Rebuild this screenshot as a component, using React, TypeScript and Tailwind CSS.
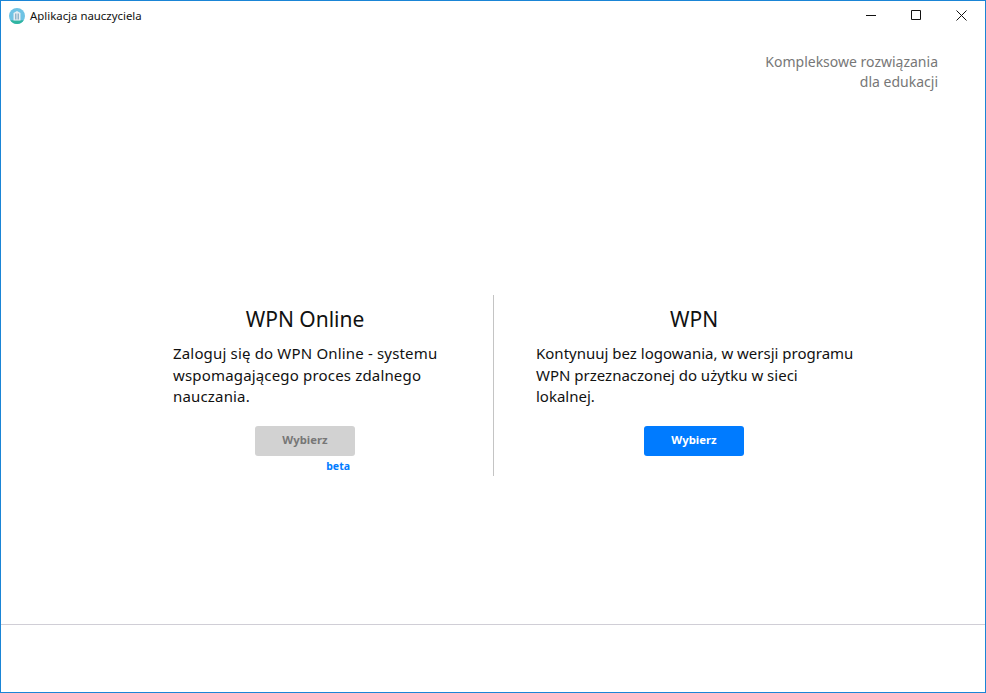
import React from "react";

const font = { fontFamily: '"Noto Sans", "Open Sans", sans-serif' };

function AppIcon() {
  return (
    <svg width="16" height="16" viewBox="0 0 16 16" className="shrink-0">
      <circle cx="8" cy="8" r="8" fill="#6fc3e4" />
      <path d="M1.2 12.2h13.6a8 8 0 0 1-13.6 0z" fill="#2fb5a0" />
      <path d="M4.5 12.5V5L8 3l3.5 2v7.5z" fill="#e6eef3" />
      <rect x="6.2" y="5.5" width="1.2" height="6" fill="#7da6bf" />
      <rect x="8.6" y="5.5" width="1.2" height="6" fill="#7da6bf" />
    </svg>
  );
}

function Choice({ title, text, disabled, beta, w, col }: { title: string; text: string[]; disabled?: boolean; beta?: boolean; w: string; col: string }) {
  return (
    <div className={`flex flex-col items-center ${col}`}>
      <h2 className="mt-[8px] text-[21px] leading-[33px] text-[#111]">{title}</h2>
      <div className={`mt-[7px] text-[15px] leading-[21.5px] text-[#111] ${w}`}>
        {text.map((t) => (
          <div key={t} className="whitespace-nowrap">{t}</div>
        ))}
      </div>
      <button
        className={`mt-[18px] h-[30px] w-[100px] rounded-[3px] text-[11.3px] font-bold ${disabled ? "bg-[#d2d2d2] text-[#777]" : "bg-[#007bff] text-white"}`}
      >
        Wybierz
      </button>
      {beta && <div className="mt-[2px] w-[100px] pr-[5px] text-right text-[10.5px] font-bold leading-[17px] text-[#007bff]">beta</div>}
    </div>
  );
}

export default function App() {
  return (
    <div style={font} className="flex h-[693px] w-[986px] flex-col overflow-hidden border border-[#1a85d6] bg-white">
      <header className="flex h-[30px] shrink-0 items-center">
        <div className="ml-[8px] flex items-center gap-[5px]">
          <AppIcon />
          <span className="text-[11.4px] text-[#111]">Aplikacja nauczyciela</span>
        </div>
        <div className="ml-auto mr-[1px] flex -translate-y-px">
          <div className="flex h-[30px] w-[45px] items-center justify-center">
            <svg width="10" height="10" viewBox="0 0 10 10"><path d="M0 5.5h10" stroke="#111" /></svg>
          </div>
          <div className="flex h-[30px] w-[46px] items-center justify-center">
            <svg width="10" height="10" viewBox="0 0 10 10"><path d="M.5.5h9v9h-9z" fill="none" stroke="#111" /></svg>
          </div>
          <div className="flex h-[30px] w-[45px] items-center justify-center">
            <svg width="11" height="11" viewBox="0 0 11 11"><path d="M.5.5l10 10M10.5.5l-10 10" stroke="#111" /></svg>
          </div>
        </div>
      </header>
      <div className="pr-[47px] pt-[21px] text-right text-[14px] leading-[20px] text-[#777]">
        <div>Kompleksowe rozwiązania</div>
        <div>dla edukacji</div>
      </div>
      <main className="flex flex-1 flex-col">
        <div className="mt-[203px] ml-[116px] flex h-[181px]">
          <Choice
            col="w-[376px]"
            w="w-[264px] tracking-[0.17px]"
            title="WPN Online"
            beta
            disabled
            text={["Zaloguj się do WPN Online - systemu", "wspomagającego proces zdalnego", "nauczania."]}
          />
          <div className="w-px bg-[#c4c4c4]" />
          <Choice
            col="w-[400px]"
            w="w-[316px]"
            title="WPN"
            text={["Kontynuuj bez logowania, w wersji programu", "WPN przeznaczonej do użytku w sieci", "lokalnej."]}
          />
        </div>
      </main>
      <footer className="h-[68px] shrink-0 border-t border-[#d0ced6]" />
    </div>
  );
}
